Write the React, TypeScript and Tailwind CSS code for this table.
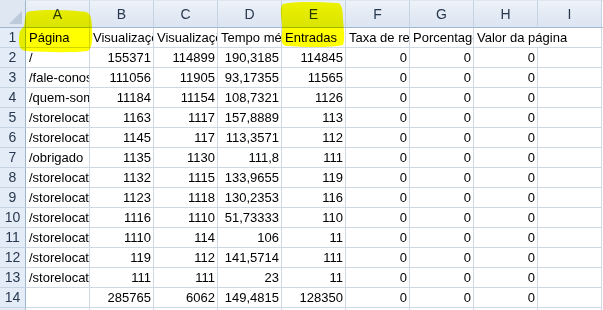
const cols = ["A", "B", "C", "D", "E", "F", "G", "H", "I"];

type Cell = string | null;

const rows: Cell[][] = [
  ["Página", "Visualizações de página", "Visualizações únicas", "Tempo médio na página", "Entradas", "Taxa de rejeição", "Porcentagem de saída", "Valor da página", null],
  ["/", "155371", "114899", "190,3185", "114845", "0", "0", "0", null],
  ["/fale-conosco", "111056", "11905", "93,17355", "11565", "0", "0", "0", null],
  ["/quem-somos", "11184", "11154", "108,7321", "1126", "0", "0", "0", null],
  ["/storelocator/sp", "1163", "1117", "157,8889", "113", "0", "0", "0", null],
  ["/storelocator/rj", "1145", "117", "113,3571", "112", "0", "0", "0", null],
  ["/obrigado", "1135", "1130", "111,8", "111", "0", "0", "0", null],
  ["/storelocator/mg", "1132", "1115", "133,9655", "119", "0", "0", "0", null],
  ["/storelocator/pr", "1123", "1118", "130,2353", "116", "0", "0", "0", null],
  ["/storelocator/rs", "1116", "1110", "51,73333", "110", "0", "0", "0", null],
  ["/storelocator/sc", "1110", "114", "106", "11", "0", "0", "0", null],
  ["/storelocator/ba", "119", "112", "141,5714", "111", "0", "0", "0", null],
  ["/storelocator/pe", "111", "111", "23", "11", "0", "0", "0", null],
  [null, "285765", "6062", "149,4815", "128350", "0", "0", "0", null],
];

const isNumber = (v: string) => /^[0-9.,]+$/.test(v);

function DataCell({ value, spill }: { value: Cell; spill: boolean }) {
  const num = value !== null && isNumber(value);
  return (
    <div
      className={
        "h-5 border-b border-[#d0d7e5] whitespace-nowrap leading-[20px] " +
        (spill ? "overflow-visible relative z-10 " : "overflow-hidden border-r ") +
        (num ? "text-right pr-[2px]" : "text-left pl-[3px]")
      }
    >
      {value}
    </div>
  );
}

export default function App() {
  return (
    <div className="relative w-[603px] h-[310px] overflow-hidden bg-white font-['Liberation_Sans',Arial,sans-serif] text-[13px] text-black">
      <div className="grid grid-cols-[26px_repeat(9,64px)_2px]">
        {/* header row */}
        <div className="h-7 border-r border-b border-t border-[#9eb6ce] border-t-[#dfe6ee] bg-[#dfe7f2] relative">
          <div className="absolute right-[3px] bottom-[3px] w-0 h-0 border-l-[13px] border-l-transparent border-b-[13px] border-b-[#bccadb]" />
        </div>
        {cols.map((c) => (
          <div
            key={c}
            className="h-7 border-r border-b border-t border-[#9eb6ce] border-r-[#c5d3e2] border-t-[#dfe6ee] bg-linear-to-b from-[#edf2f9] to-[#dbe4f1] flex items-end justify-center pb-[2px] text-[#27384f] text-[14px]"
          >
            {c}
          </div>
        ))}
        <div className="h-7 border-b border-t border-[#9eb6ce] border-t-[#dfe6ee] bg-white" />

        {rows.map((r, i) => (
          <div key={i} className="contents">
            <div className="h-5 border-r border-b border-[#9eb6ce] border-b-[#c5d3e2] bg-[#e4ecf7] flex items-center justify-center text-[#27384f] text-[14px]">
              {i + 1}
            </div>
            {r.map((v, j) => (
              <DataCell key={j} value={v} spill={i === 0 && j === 7} />
            ))}
            <div className="h-5 bg-white" />
          </div>
        ))}
        <div className="h-5 border-r border-[#9eb6ce] bg-[#e4ecf7]" />
        {cols.map((c) => (
          <div key={c} className="h-5 border-r border-[#d0d7e5]" />
        ))}
        <div className="h-5" />
      </div>

      {/* marker highlights */}
      <svg className="absolute left-0 top-0 pointer-events-none mix-blend-multiply" width="603" height="310">
        <path
          d="M27 12 C40 9 70 10 86 12 C91 13 92 20 92 30 C93 40 92 48 88 51 C70 53 45 52 26 51 C20 50 19 46 19 40 C19 33 20 29 24 27 C25 22 25 15 27 12 Z"
          fill="#ffff00"
        />
        <path
          d="M283 4 C295 1 320 2 338 3 C342 4 343 10 343 20 C344 30 345 40 343 45 C330 48 305 47 286 46 C281 45 281 40 282 33 C283 25 280 15 281 8 C281 6 282 5 283 4 Z"
          fill="#ffff00"
        />
      </svg>
    </div>
  );
}
